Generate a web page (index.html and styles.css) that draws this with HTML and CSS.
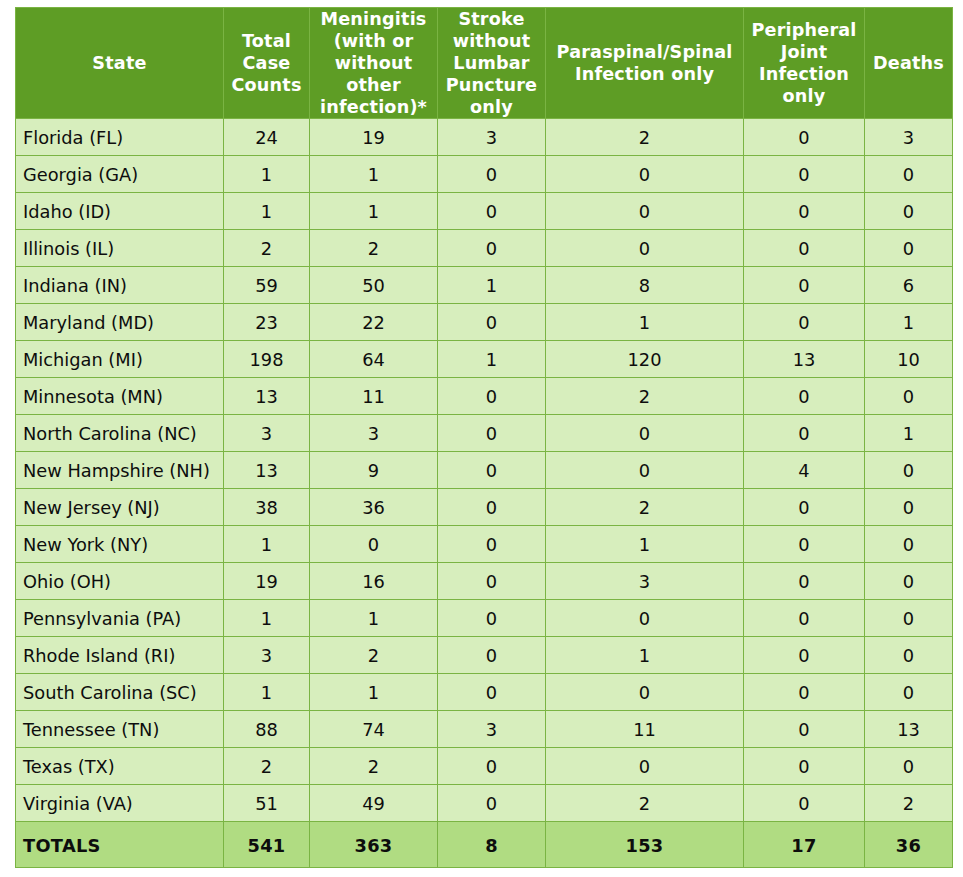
FILE: index.html
```html
<!DOCTYPE html>
<html>
<head>
<meta charset="utf-8">
<link rel="stylesheet" href="styles.css">
</head>
<body>
<table class="cases">
  <colgroup>
    <col class="c-state">
    <col class="c-total">
    <col class="c-men">
    <col class="c-stroke">
    <col class="c-spinal">
    <col class="c-joint">
    <col class="c-deaths">
  </colgroup>
  <thead>
    <tr class="head">
      <th>State</th>
      <th>Total Case Counts</th>
      <th>Meningitis (with or without other infection)*</th>
      <th>Stroke without Lumbar Puncture only</th>
      <th>Paraspinal/Spinal Infection only</th>
      <th>Peripheral Joint Infection only</th>
      <th>Deaths</th>
    </tr>
  </thead>
  <tbody>
    <tr><td class="st">Florida (FL)</td><td>24</td><td>19</td><td>3</td><td>2</td><td>0</td><td>3</td></tr>
    <tr><td class="st">Georgia (GA)</td><td>1</td><td>1</td><td>0</td><td>0</td><td>0</td><td>0</td></tr>
    <tr><td class="st">Idaho (ID)</td><td>1</td><td>1</td><td>0</td><td>0</td><td>0</td><td>0</td></tr>
    <tr><td class="st">Illinois (IL)</td><td>2</td><td>2</td><td>0</td><td>0</td><td>0</td><td>0</td></tr>
    <tr><td class="st">Indiana (IN)</td><td>59</td><td>50</td><td>1</td><td>8</td><td>0</td><td>6</td></tr>
    <tr><td class="st">Maryland (MD)</td><td>23</td><td>22</td><td>0</td><td>1</td><td>0</td><td>1</td></tr>
    <tr><td class="st">Michigan (MI)</td><td>198</td><td>64</td><td>1</td><td>120</td><td>13</td><td>10</td></tr>
    <tr><td class="st">Minnesota (MN)</td><td>13</td><td>11</td><td>0</td><td>2</td><td>0</td><td>0</td></tr>
    <tr><td class="st">North Carolina (NC)</td><td>3</td><td>3</td><td>0</td><td>0</td><td>0</td><td>1</td></tr>
    <tr><td class="st">New Hampshire (NH)</td><td>13</td><td>9</td><td>0</td><td>0</td><td>4</td><td>0</td></tr>
    <tr><td class="st">New Jersey (NJ)</td><td>38</td><td>36</td><td>0</td><td>2</td><td>0</td><td>0</td></tr>
    <tr><td class="st">New York (NY)</td><td>1</td><td>0</td><td>0</td><td>1</td><td>0</td><td>0</td></tr>
    <tr><td class="st">Ohio (OH)</td><td>19</td><td>16</td><td>0</td><td>3</td><td>0</td><td>0</td></tr>
    <tr><td class="st">Pennsylvania (PA)</td><td>1</td><td>1</td><td>0</td><td>0</td><td>0</td><td>0</td></tr>
    <tr><td class="st">Rhode Island (RI)</td><td>3</td><td>2</td><td>0</td><td>1</td><td>0</td><td>0</td></tr>
    <tr><td class="st">South Carolina (SC)</td><td>1</td><td>1</td><td>0</td><td>0</td><td>0</td><td>0</td></tr>
    <tr><td class="st">Tennessee (TN)</td><td>88</td><td>74</td><td>3</td><td>11</td><td>0</td><td>13</td></tr>
    <tr><td class="st">Texas (TX)</td><td>2</td><td>2</td><td>0</td><td>0</td><td>0</td><td>0</td></tr>
    <tr><td class="st">Virginia (VA)</td><td>51</td><td>49</td><td>0</td><td>2</td><td>0</td><td>2</td></tr>
  </tbody>
  <tfoot>
    <tr class="totals"><td class="st">TOTALS</td><td>541</td><td>363</td><td>8</td><td>153</td><td>17</td><td>36</td></tr>
  </tfoot>
</table>
</body>
</html>
```
FILE: styles.css
```css
html, body {
  margin: 0;
  padding: 0;
  background: #ffffff;
}

.cases {
  margin: 7px 0 0 15px;
  border-collapse: collapse;
  table-layout: fixed;
  width: 937px;
  font-family: "DejaVu Sans", Verdana, sans-serif;
  font-size: 17.8px;
  color: #0d0d0d;
}

.c-state { width: 208px; }
.c-total { width: 86px; }
.c-men { width: 128px; }
.c-stroke { width: 108px; }
.c-spinal { width: 198px; }
.c-joint { width: 121px; }
.c-deaths { width: 88px; }

.cases th,
.cases td {
  border: 1px solid #7ab443;
  padding: 2px 2px 0;
  vertical-align: middle;
  text-align: center;
}

.head {
  height: 111px;
}

.cases .head th {
  background: #5e9d25;
  color: #ffffff;
  font-weight: bold;
  font-size: 17.6px;
  letter-spacing: 0.2px;
  line-height: 22px;
  padding: 0 2px;
}

tbody tr {
  height: 37px;
}

tbody td {
  background: #d7eebd;
  line-height: 22px;
}

.cases td.st {
  text-align: left;
  padding-left: 7px;
}

.totals {
  height: 46px;
}

.totals td {
  background: #b0dc82;
  font-weight: bold;
  letter-spacing: 0.3px;
}
```
